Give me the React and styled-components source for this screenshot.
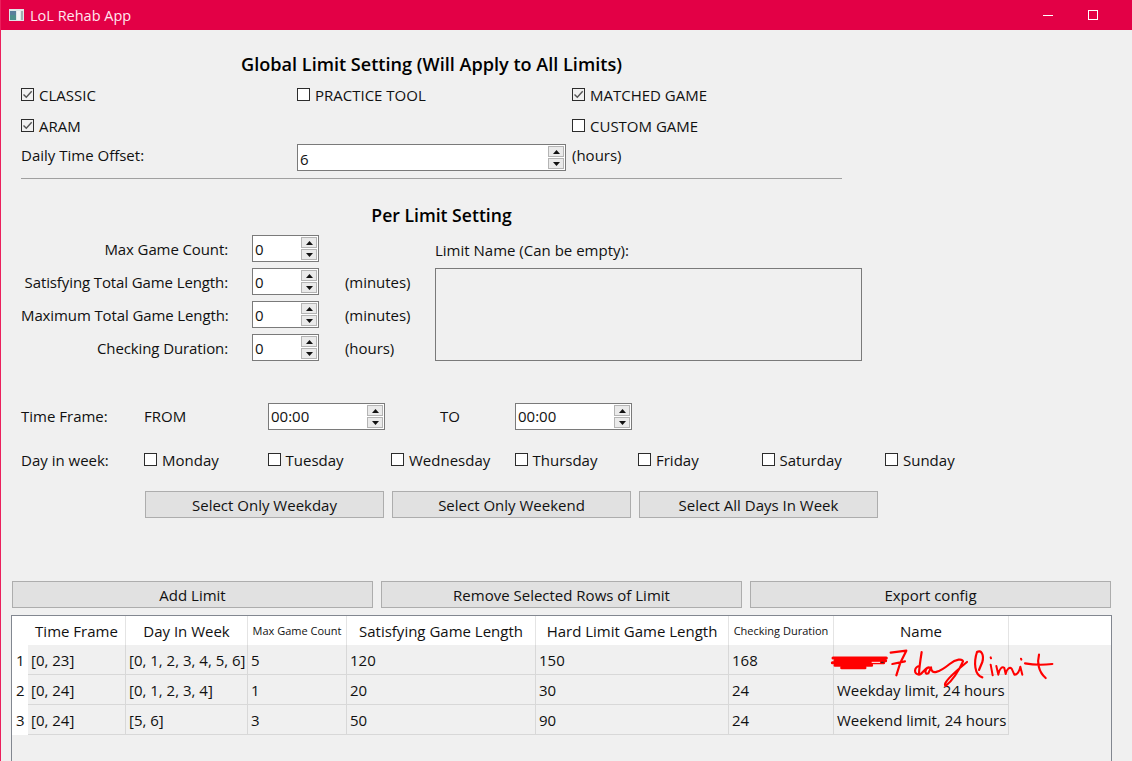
import React from "react";
import styled, { createGlobalStyle } from "styled-components";

const Global = createGlobalStyle`
  html, body { margin: 0; padding: 0; background: #f0f0f0; overflow: hidden; }
  * { box-sizing: border-box; }
`;
const Window = styled.div`
  width: 1132px; height: 761px; overflow: hidden; position: relative;
  background: #f0f0f0; border-left: 1px solid #eb1f5c;
  font-family: "Open Sans", "Liberation Sans", sans-serif; font-size: 15px; color: #111;
`;
const TitleBar = styled.header`
  height: 30px; margin-left: -1px; background: #e30046; color: #fff; display: flex; align-items: center;
  padding-left: 9px; font-size: 14.5px; position: relative;
`;
const TitleText = styled.span` margin-left: 6px; color: #ffe6ee; `;
const WinButtons = styled.div` margin-left: auto; display: flex; align-items: center; gap: 35px; padding-right: 34px; `;
const Heading = styled.h2`
  margin: ${p => p.$top}px 0 0; width: ${p => p.$width}px; height: 26px; line-height: 26px; text-align: center;
  font-size: ${p => p.$size}px; font-weight: 600; color: #000; white-space: nowrap;
`;
const GlobalGrid = styled.div`
  margin: 3px 0 0 20px; display: grid; grid-template-columns: 276px 275px 1fr; grid-auto-rows: 31px; align-items: center;
`;
const Check = styled.label` display: flex; align-items: center; gap: 5px; white-space: nowrap; `;
const Box = styled.span`
  width: 13px; height: 13px; border: 1px solid #2c2c2c; background: ${p => (p.$on ? "#f0f0f0" : "#fff")};
  display: inline-flex; flex: none; position: relative; top: -1px;
`;
const Text = styled.span` white-space: nowrap; padding-bottom: ${p => p.$lift ?? 2}px; `;
const OffsetLabel = styled(Text)` padding-bottom: 6px; `;
const Spin = styled.div`
  width: ${p => p.$w}px; height: 27px; border: 1px solid #7a7a7a; background: #fff; display: flex; align-items: center;
  padding: 1px 1px 1px 2px; flex: none;
`;
const SpinValue = styled.span` flex: 1; padding-top: ${p => p.$drop}px; padding-bottom: 1px; `;
const SpinBtns = styled.div` display: flex; flex-direction: column; gap: 1px; width: 16px; height: 23px; `;
const SpinBtn = styled.div`
  flex: 1; background: #eaeaea; border: 1px solid #b4b4b4; display: flex; align-items: center; justify-content: center;
`;
const Divider = styled.hr` margin: 5px 0 0 20px; width: 821px; height: 1px; border: 0; background: #a0a0a0; `;
const PerBody = styled.div` margin: 7px 0 0 20px; display: flex; `;
const PerGrid = styled.div`
  display: grid; grid-template-columns: 207px 67px 90px; column-gap: 24px; grid-auto-rows: 27px; row-gap: 6px; align-items: center; width: 414px;
`;
const RightLabel = styled.span` text-align: right; white-space: nowrap; letter-spacing: -0.11px; `;
const Unit = styled.span` margin-left: 2px; white-space: nowrap; letter-spacing: -0.05px; `;
const NameBlock = styled.div` display: flex; flex-direction: column; `;
const NameLabel = styled.div` height: 33px; line-height: 30px; white-space: nowrap; `;
const NameBox = styled.div` width: 427px; height: 93px; border: 1px solid #7a7a7a; background: #f0f0f0; `;
const TimeRow = styled.div` margin: 42px 0 0 20px; height: 27px; display: flex; align-items: center; `;
const Col = styled.div` width: ${p => p.$w}px; margin-left: ${p => p.$gap || 0}px; flex: none; white-space: nowrap; padding-bottom: ${p => p.$lift ?? 2}px; `;
const DayRow = styled.div` margin: 17px 0 0 20px; height: 26px; display: flex; align-items: center; `;
const Days = styled.div` display: grid; grid-template-columns: repeat(7, 123.5px); `;
const ButtonRow = styled.div`
  margin: ${p => p.$top}px 0 0 ${p => p.$left}px; display: flex; gap: 8px;
`;
const Button = styled.div`
  width: ${p => p.$w}px; height: 27px; background: #e1e1e1; border: 1px solid #adadad; display: flex; align-items: center; justify-content: center; white-space: nowrap;
`;
const TableFrame = styled.div`
  margin: 7px 0 0 10px; width: 1101px; height: 160px; border: 1px solid #828790; background: #f0f0f0; position: relative;
`;
const Table = styled.div`
  display: grid; grid-template-columns: 16px 98px 122px 99px 189px 193px 105px 175px 1fr; grid-template-rows: 29px repeat(3, 30px);
`;
const Corner = styled.div` background: #fff; `;
const HeadCell = styled.div`
  background: #fff; border-right: 1px solid #e4e4e4; display: flex; align-items: center; justify-content: center; white-space: nowrap;
  font-size: ${p => (p.$small ? "11px" : "15px")};
`;
const RowHead = styled.div` background: #fff; display: flex; align-items: center; padding-left: 4px; `;
const Cell = styled.div`
  background: #f0f0f0; border-right: 1px solid #d8d8d8; border-bottom: 1px solid #d8d8d8; display: flex; align-items: center; padding-left: 3px; white-space: nowrap;
`;
const Filler = styled.div` background: ${p => (p.$head ? "#fff" : "#f0f0f0")}; `;
const Scribble = styled.svg`
  position: absolute; left: 824px; top: 642px; pointer-events: none;
`;

const UpArrow = () => <svg width="7" height="4" viewBox="0 0 7 4"><path d="M3.5 0 7 4H0z" fill="#111" /></svg>;
const DownArrow = () => <svg width="7" height="4" viewBox="0 0 7 4"><path d="M0 0h7L3.5 4z" fill="#111" /></svg>;
const SpinBox = ({ w, value, drop = 0 }) => (
  <Spin $w={w}>
    <SpinValue $drop={drop}>{value}</SpinValue>
    <SpinBtns>
      <SpinBtn><UpArrow /></SpinBtn>
      <SpinBtn><DownArrow /></SpinBtn>
    </SpinBtns>
  </Spin>
);
const CheckBox = ({ on, lift, children }) => (
  <Check>
    <Box $on={on}>
      {on && <svg width="11" height="11" viewBox="0 0 11 11"><path d="M1.5 5.5 4.3 8.3 9.7 2.2" fill="none" stroke="#555" strokeWidth="1.4" /></svg>}
    </Box>
    <Text $lift={lift}>{children}</Text>
  </Check>
);

const headers = [
  ["Time Frame"], ["Day In Week"], ["Max Game Count", true], ["Satisfying Game Length"],
  ["Hard Limit Game Length"], ["Checking Duration", true], ["Name"],
];
const rows = [
  ["[0, 23]", "[0, 1, 2, 3, 4, 5, 6]", "5", "120", "150", "168", ""],
  ["[0, 24]", "[0, 1, 2, 3, 4]", "1", "20", "30", "24", "Weekday limit, 24 hours"],
  ["[0, 24]", "[5, 6]", "3", "50", "90", "24", "Weekend limit, 24 hours"],
];
const days = ["Monday", "Tuesday", "Wednesday", "Thursday", "Friday", "Saturday", "Sunday"];
const perRows = [
  ["Max Game Count:", ""],
  ["Satisfying Total Game Length:", "(minutes)"],
  ["Maximum Total Game Length:", "(minutes)"],
  ["Checking Duration:", "(hours)"],
];

export default function App() {
  return (
    <Window>
      <Global />
      <TitleBar>
        <svg width="15" height="12" viewBox="0 0 15 12">
          <rect width="15" height="12" fill="#dfe6e6" />
          <rect x="1" y="2" width="6" height="9" fill="#4f8f8c" />
          <rect x="1" y="2" width="6" height="4" fill="#5a7f9c" />
          <rect x="8" y="2" width="3" height="9" fill="#f4f4f4" />
          <rect x="12" y="2" width="2" height="9" fill="#9fb0b0" />
        </svg>
        <TitleText>LoL Rehab App</TitleText>
        <WinButtons>
          <svg width="10" height="10" viewBox="0 0 10 10"><path d="M0 5.5h10" stroke="#fff" /></svg>
          <svg width="10" height="10" viewBox="0 0 10 10"><rect x=".5" y=".5" width="9" height="9" fill="none" stroke="#fff" /></svg>
        </WinButtons>
      </TitleBar>

      <Heading $top={21} $width={861} $size={18.1}>Global Limit Setting (Will Apply to All Limits)</Heading>
      <GlobalGrid>
        <CheckBox on>CLASSIC</CheckBox>
        <CheckBox>PRACTICE TOOL</CheckBox>
        <CheckBox on>MATCHED GAME</CheckBox>
        <CheckBox on>ARAM</CheckBox>
        <span />
        <CheckBox>CUSTOM GAME</CheckBox>
        <OffsetLabel>Daily Time Offset:</OffsetLabel>
        <SpinBox w={269} value="6" drop={4} />
        <OffsetLabel>(hours)</OffsetLabel>
      </GlobalGrid>
      <Divider />

      <Heading $top={23} $width={881} $size={17.6}>Per Limit Setting</Heading>
      <PerBody>
        <PerGrid>
          {perRows.map(([label, unit]) => (
            <React.Fragment key={label}>
              <RightLabel>{label}</RightLabel>
              <SpinBox w={67} value="0" drop={1} />
              <Unit>{unit}</Unit>
            </React.Fragment>
          ))}
        </PerGrid>
        <NameBlock>
          <NameLabel>Limit Name (Can be empty):</NameLabel>
          <NameBox />
        </NameBlock>
      </PerBody>

      <TimeRow>
        <Col $w={123}>Time Frame:</Col>
        <Col $w={124}>FROM</Col>
        <SpinBox w={117} value="00:00" />
        <Col $w={75} $gap={55}>TO</Col>
        <SpinBox w={117} value="00:00" />
      </TimeRow>

      <DayRow>
        <Col $w={123} $lift={1}>Day in week:</Col>
        <Days>
          {days.map(d => <CheckBox key={d} lift={1}>{d}</CheckBox>)}
        </Days>
      </DayRow>

      <ButtonRow $top={18} $left={144}>
        <Button $w={239}>Select Only Weekday</Button>
        <Button $w={239}>Select Only Weekend</Button>
        <Button $w={239}>Select All Days In Week</Button>
      </ButtonRow>

      <ButtonRow $top={63} $left={11}>
        <Button $w={361}>Add Limit</Button>
        <Button $w={361}>Remove Selected Rows of Limit</Button>
        <Button $w={361}>Export config</Button>
      </ButtonRow>

      <TableFrame>
        <Table>
          <Corner />
          {headers.map(([h, small]) => <HeadCell key={h} $small={small}>{h}</HeadCell>)}
          <Filler $head />
          {rows.map((r, i) => (
            <React.Fragment key={i}>
              <RowHead>{i + 1}</RowHead>
              {r.map((c, j) => <Cell key={j}>{c}</Cell>)}
              <Filler />
            </React.Fragment>
          ))}
        </Table>
      </TableFrame>

      <Scribble width="235" height="50" viewBox="0 0 705 150">
        <g fill="none" stroke="#ff0000" strokeLinecap="round" strokeLinejoin="round">
          <path d="M24 48 H184 M30 56 H182 M22 62 H176 M30 70 H140 M50 77 H120" strokeWidth="9" />
          <path d="M197 32 L244 26 L226 62 L214 100 M202 66 L240 58" strokeWidth="6.5" />
          <path d="M290 30 C286 55 282 80 282 98 M284 72 C268 74 264 96 282 98 C292 98 298 78 312 76 C298 78 298 100 310 94 L318 76 C318 100 342 92 374 66 C394 50 412 50 414 58 C402 85 382 115 362 132 C352 125 380 98 426 60" strokeWidth="6.5" />
          <path d="M456 30 C446 60 448 100 472 106 M456 30 C468 22 478 38 472 60 L462 84" strokeWidth="6.5" />
          <path d="M497 68 L503 100 M497 46 L498 49 M514 72 L520 98 C522 80 532 72 538 78 L542 96 C546 80 554 74 560 80 L568 98 C574 98 582 92 586 74 L592 98 M588 50 L589 53" strokeWidth="6" />
          <path d="M600 64 C620 68 650 70 682 66 M642 38 C636 60 640 90 662 108" strokeWidth="6.5" />
        </g>
        <path d="M140 61 H165" stroke="#fff" strokeWidth="3" />
        <path d="M168 61 H176" stroke="#222" strokeWidth="3" />
      </Scribble>
    </Window>
  );
}
